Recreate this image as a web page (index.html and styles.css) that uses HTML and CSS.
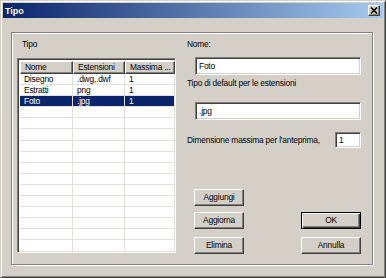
FILE: index.html
```html
<!DOCTYPE html>
<html lang="it">
<head>
	<meta charset="UTF-8">
	<title>Tipo</title>
	<link rel="stylesheet" href="styles.css">
</head>
<body>
	<div class="window">
		<div class="titlebar">
			<span class="title">Tipo</span>
			<span class="close"><svg width="8" height="7" viewBox="0 0 8 7"><path d="M1 0.5 L7 6.5 M7 0.5 L1 6.5" stroke="#000" stroke-width="1.6"/></svg></span>
		</div>
		<div class="content">
			<div class="group">
				<div class="left">
					<div class="label tipo">Tipo</div>
					<div class="list">
						<div class="head">
							<span>Nome</span><span>Estensioni</span><span>Massima ...</span>
						</div>
						<div class="rows">
							<div class="row"><span>Disegno</span><span>.dwg,.dwf</span><span>1</span></div>
							<div class="row"><span>Estratti</span><span>png</span><span>1</span></div>
							<div class="row sel"><span>Foto</span><span>.jpg</span><span>1</span></div>
							<div class="row"><span></span><span></span><span></span></div>
							<div class="row"><span></span><span></span><span></span></div>
							<div class="row"><span></span><span></span><span></span></div>
							<div class="row"><span></span><span></span><span></span></div>
							<div class="row"><span></span><span></span><span></span></div>
							<div class="row"><span></span><span></span><span></span></div>
							<div class="row"><span></span><span></span><span></span></div>
							<div class="row"><span></span><span></span><span></span></div>
							<div class="row"><span></span><span></span><span></span></div>
							<div class="row"><span></span><span></span><span></span></div>
							<div class="row"><span></span><span></span><span></span></div>
							<div class="row"><span></span><span></span><span></span></div>
							<div class="row"><span></span><span></span><span></span></div>
						</div>
					</div>
				</div>
				<div class="right">
					<div class="label">Nome:</div>
					<div class="field wide f1">Foto</div>
					<div class="label l2">Tipo di default per le estensioni</div>
					<div class="field wide f2">.jpg</div>
					<div class="dim">
						<span class="label">Dimensione massima per l'anteprima,</span>
						<span class="field small">1</span>
					</div>
					<div class="buttons">
						<div class="btn b-add">Aggiungi</div>
						<div class="btn b-upd">Aggiorna</div>
						<div class="btn default b-ok">OK</div>
						<div class="btn b-del">Elimina</div>
						<div class="btn b-cancel">Annulla</div>
					</div>
				</div>
			</div>
		</div>
	</div>
</body>
</html>
```

FILE: styles.css
```css
html,body{margin:0;padding:0;}
body{font-family:"Liberation Sans",Arial,sans-serif;font-size:8.4px;letter-spacing:-0.2px;color:#000;background:#d4d0c8;}

.window{box-sizing:border-box;width:386px;height:278px;background:#d4d0c8;border:1px solid;border-color:#d4d0c8 #404040 #404040 #d4d0c8;box-shadow:inset 1px 1px 0 #fff,inset -1px -1px 0 #808080;padding:2px 2px 0 2px;display:flex;flex-direction:column;}

.titlebar{height:15px;display:flex;align-items:center;justify-content:space-between;padding:0 3px 0 2px;background:linear-gradient(to right,#0a246a,#a6caf0);}
.title{color:#fff;font-weight:bold;font-size:9px;letter-spacing:0;}
.close{box-sizing:border-box;width:12px;height:11px;background:#d4d0c8;border:1px solid;border-color:#fff #404040 #404040 #fff;box-shadow:inset -1px -1px 0 #808080;display:flex;align-items:center;justify-content:center;}
.close svg{display:block;}

.content{padding:14px 10px 0 8px;}

.group{box-sizing:border-box;height:233px;border:1px solid #808080;box-shadow:1px 1px 0 #fff,inset 1px 1px 0 #fff;display:flex;gap:11px;padding:5px 11px 0 5px;}

.label{line-height:12px;height:12px;white-space:nowrap;}
.tipo{padding-left:5px;}

.left{width:159px;}
.list{box-sizing:border-box;margin-top:8px;height:195px;background:#fff;border:1px solid;border-color:#808080 #fff #fff #808080;box-shadow:inset 1px 1px 0 #404040,inset -1px -1px 0 #d4d0c8;padding:2px;overflow:hidden;}
.head,.row{display:grid;grid-template-columns:53px 52px 50px;}
.head span{box-sizing:border-box;height:13px;line-height:11px;padding-left:4px;background:#d4d0c8;border:1px solid;border-color:#fff #404040 #404040 #fff;box-shadow:inset -1px -1px 0 #808080;white-space:nowrap;overflow:hidden;}
.row{height:11.1px;}
.row span{box-sizing:border-box;border-right:1px solid #e2e0dc;border-bottom:1px solid #e2e0dc;padding-left:4px;line-height:10px;white-space:nowrap;overflow:hidden;}
.row.sel span{background:#0a246a;color:#fff;}

.right{width:175px;display:flex;flex-direction:column;}
.field{box-sizing:border-box;background:#fff;border:1px solid;border-color:#808080 #fff #fff #808080;box-shadow:inset 1px 1px 0 #404040,inset -1px -1px 0 #d4d0c8;padding-left:3px;}
.wide{margin-left:8px;width:166px;height:18px;line-height:16px;}
.f1{margin-top:7px;}
.l2{margin-top:2px;}
.f2{margin-top:13px;}
.dim{margin-top:12px;display:flex;align-items:center;justify-content:space-between;height:16px;}
.small{width:26px;height:16px;line-height:14px;}

.buttons{margin-top:41px;margin-left:7px;display:grid;grid-template-columns:50px 1fr 60px;grid-template-rows:17px 17px 17px;row-gap:6px;}
.btn{box-sizing:border-box;height:17px;line-height:15px;text-align:center;background:#d4d0c8;border:1px solid;border-color:#fff #404040 #404040 #fff;box-shadow:inset -1px -1px 0 #808080;}
.b-add{grid-column:1;grid-row:1;}
.b-upd{grid-column:1;grid-row:2;}
.b-del{grid-column:1;grid-row:3;margin-top:2px;}
.b-ok{grid-column:3;grid-row:2;}
.b-cancel{grid-column:3;grid-row:3;margin-top:2px;}
.btn.default{border:1px solid #000;box-shadow:inset 1px 1px 0 #fff,inset -1px -1px 0 #404040,inset -2px -2px 0 #808080;}
```
